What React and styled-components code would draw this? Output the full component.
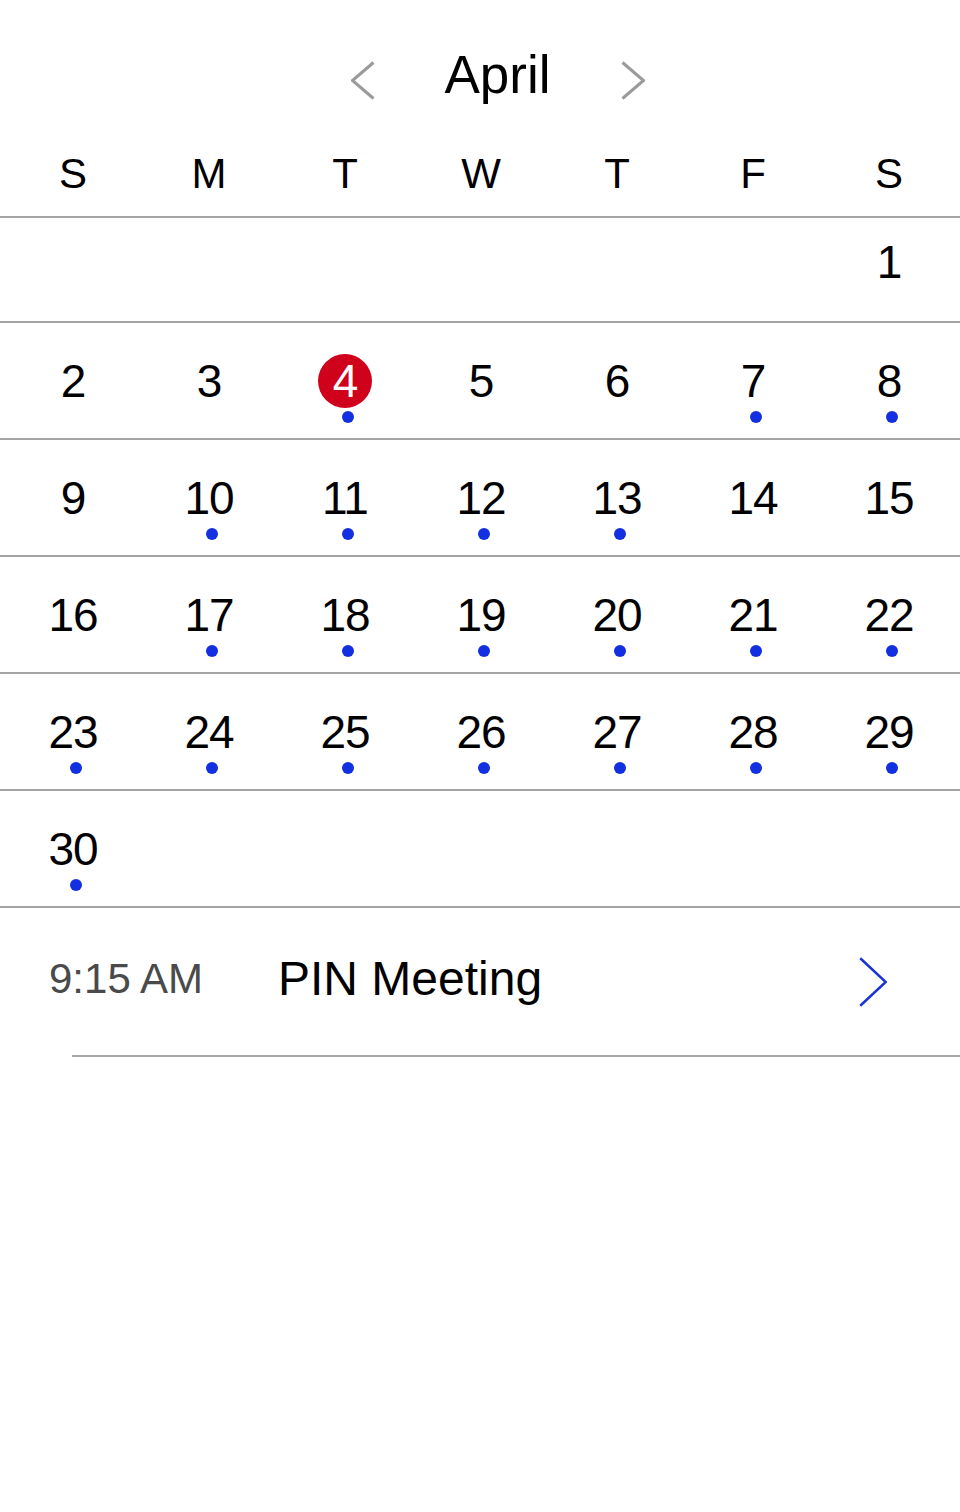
import React from 'react'
import styled, { createGlobalStyle } from 'styled-components'

const GlobalStyle = createGlobalStyle`
  body {
    margin: 0;
    background: #fff;
    font-family: 'Liberation Sans', Arial, Helvetica, sans-serif;
    color: #000;
  }
`

const Page = styled.div`
  width: 960px;
  min-height: 1512px;
  background: #fff;
`

const MonthBar = styled.div`
  display: flex;
  align-items: center;
  justify-content: center;
  height: 100px;
  padding: 24px 0 0 35px;
  gap: 70px;
`

const MonthTitle = styled.div`
  font-size: 53px;
  line-height: 1;
  width: 106px;
  text-align: center;
`

const NavButton = styled.button`
  display: flex;
  padding: 12px 0 0;
  border: 0;
  background: none;
  cursor: pointer;
`

const WeekdayRow = styled.div`
  display: grid;
  grid-template-columns: repeat(7, 136px);
  padding: 8px 0 0 5px;
  height: 84px;
  align-items: center;
  border-bottom: 2px solid #a4a4a4;
`

const Weekday = styled.div`
  font-size: 42px;
  line-height: 1;
  text-align: center;
  font-weight: 300;
`

const WeekRow = styled.div`
  display: grid;
  grid-template-columns: repeat(7, 136px);
  padding-left: 5px;
  height: ${({ $first }) => ($first ? '103px' : '115px')};
  border-bottom: 2px solid #a4a4a4;
`

const DayCell = styled.div`
  display: flex;
  flex-direction: column;
  align-items: center;
  padding-top: ${({ $first }) => ($first ? '17px' : '31px')};
`

const DayNumber = styled.div`
  display: flex;
  align-items: center;
  justify-content: center;
  width: 54px;
  height: 54px;
  border-radius: 50%;
  font-size: 46px;
  line-height: 1;
  letter-spacing: -1px;
  background: ${({ $today }) => ($today ? '#d0021b' : 'transparent')};
  color: ${({ $today }) => ($today ? '#fff' : '#000')};
  white-space: nowrap;
`

const EventDot = styled.span`
  width: 12px;
  height: 12px;
  margin: 3px 0 0 6px;
  border-radius: 50%;
  background: #1230e0;
`

const EventItem = styled.div`
  display: flex;
  align-items: center;
  height: 147px;
  padding: 0 73px 6px 49px;
  box-sizing: border-box;
`

const EventTime = styled.div`
  width: 229px;
  flex-shrink: 0;
  font-size: 42px;
  color: #4a4a4a;
  line-height: 1;
`

const EventTitle = styled.div`
  flex: 1;
  font-size: 48px;
  line-height: 1;
`

const DetailLink = styled.span`
  display: flex;
  padding-top: 6px;
`

const Divider = styled.div`
  margin-left: 72px;
  border-top: 2px solid #a8a8a8;
`

const Chevron = ({ dir = 'right', color, w, h, sw }) => (
  <svg width={w} height={h} viewBox={`0 0 ${w} ${h}`} fill="none">
    <polyline
      points={
        dir === 'left'
          ? `${w - sw / 2},${sw / 2} ${sw / 2},${h / 2} ${w - sw / 2},${h - sw / 2}`
          : `${sw / 2},${sw / 2} ${w - sw / 2},${h / 2} ${sw / 2},${h - sw / 2}`
      }
      stroke={color}
      strokeWidth={sw}
      strokeLinejoin="miter"
    />
  </svg>
)

const weekdays = ['S', 'M', 'T', 'W', 'T', 'F', 'S']

const withEvents = new Set([4, 7, 8, 10, 11, 12, 13, 17, 18, 19, 20, 21, 22, 23, 24, 25, 26, 27, 28, 29, 30])
const today = 4

const buildWeeks = () => {
  const cells = [...Array(6).fill(null)]
  for (let d = 1; d <= 30; d++) cells.push(d)
  while (cells.length % 7) cells.push(null)
  const weeks = []
  for (let i = 0; i < cells.length; i += 7) weeks.push(cells.slice(i, i + 7))
  return weeks
}

export default function App() {
  const weeks = buildWeeks()
  return (
    <Page>
      <GlobalStyle />
      <MonthBar>
        <NavButton aria-label="Previous month">
          <Chevron dir="left" color="#9b9b9b" w={24} h={39} sw={3} />
        </NavButton>
        <MonthTitle>April</MonthTitle>
        <NavButton aria-label="Next month">
          <Chevron dir="right" color="#9b9b9b" w={24} h={39} sw={3} />
        </NavButton>
      </MonthBar>
      <WeekdayRow>
        {weekdays.map((d, i) => (
          <Weekday key={i}>{d}</Weekday>
        ))}
      </WeekdayRow>
      {weeks.map((week, wi) => (
        <WeekRow key={wi} $first={wi === 0}>
          {week.map((day, di) => (
            <DayCell key={di} $first={wi === 0}>
              {day && <DayNumber $today={day === today}>{day}</DayNumber>}
              {day && withEvents.has(day) && <EventDot />}
            </DayCell>
          ))}
        </WeekRow>
      ))}
      <EventItem>
        <EventTime>9:15 AM</EventTime>
        <EventTitle>PIN Meeting</EventTitle>
        <DetailLink>
          <Chevron dir="right" color="#1a33d6" w={28} h={50} sw={2.5} />
        </DetailLink>
      </EventItem>
      <Divider />
    </Page>
  )
}
